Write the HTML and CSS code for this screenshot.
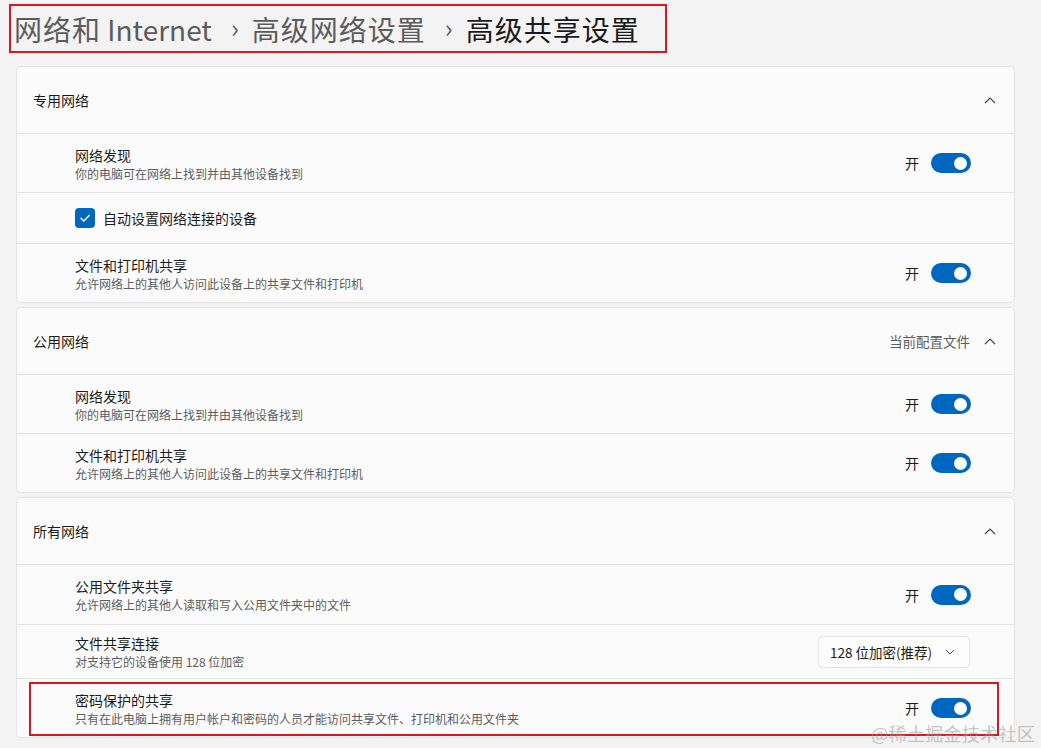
FILE: index.html
```html
<!DOCTYPE html>
<html lang="zh-CN">
<head>
<meta charset="utf-8">
<title>高级共享设置</title>
<link rel="stylesheet" href="styles.css">
</head>
<body>
<div class="page">
  <div class="crumbs">
    <span class="crumb"><span class="cjk">网络和</span> Internet</span>
    <span class="sep">›</span>
    <span class="crumb cjk">高级网络设置</span>
    <span class="sep">›</span>
    <span class="crumb cjk current">高级共享设置</span>
  </div>

  <div class="cards">
    <section class="card">
      <div class="card-head">
        <span class="head-title">专用网络</span>
        <span class="head-right"><svg class="chev" viewBox="0 0 12 8" width="12" height="8"><path d="M1 7 L6 2 L11 7" fill="none" stroke="#444" stroke-width="1.2"/></svg></span>
      </div>
      <div class="row">
        <div class="row-text"><div class="row-title">网络发现</div><div class="row-sub">你的电脑可在网络上找到并由其他设备找到</div></div>
        <div class="ctrl"><span class="on">开</span><span class="toggle"><span class="knob"></span></span></div>
      </div>
      <div class="row row-check">
        <span class="check"><svg viewBox="0 0 20 20" width="20" height="20"><path d="M6 10.2 L8.8 13 L14.2 7.4" fill="none" stroke="#fff" stroke-width="1.4" stroke-linecap="round" stroke-linejoin="round"/></svg></span>
        <span class="check-label">自动设置网络连接的设备</span>
      </div>
      <div class="row">
        <div class="row-text"><div class="row-title">文件和打印机共享</div><div class="row-sub">允许网络上的其他人访问此设备上的共享文件和打印机</div></div>
        <div class="ctrl"><span class="on">开</span><span class="toggle"><span class="knob"></span></span></div>
      </div>
    </section>

    <section class="card">
      <div class="card-head">
        <span class="head-title">公用网络</span>
        <span class="head-right"><span class="profile">当前配置文件</span><svg class="chev" viewBox="0 0 12 8" width="12" height="8"><path d="M1 7 L6 2 L11 7" fill="none" stroke="#444" stroke-width="1.2"/></svg></span>
      </div>
      <div class="row">
        <div class="row-text"><div class="row-title">网络发现</div><div class="row-sub">你的电脑可在网络上找到并由其他设备找到</div></div>
        <div class="ctrl"><span class="on">开</span><span class="toggle"><span class="knob"></span></span></div>
      </div>
      <div class="row">
        <div class="row-text"><div class="row-title">文件和打印机共享</div><div class="row-sub">允许网络上的其他人访问此设备上的共享文件和打印机</div></div>
        <div class="ctrl"><span class="on">开</span><span class="toggle"><span class="knob"></span></span></div>
      </div>
    </section>

    <section class="card">
      <div class="card-head">
        <span class="head-title">所有网络</span>
        <span class="head-right"><svg class="chev" viewBox="0 0 12 8" width="12" height="8"><path d="M1 7 L6 2 L11 7" fill="none" stroke="#444" stroke-width="1.2"/></svg></span>
      </div>
      <div class="row row-tall">
        <div class="row-text"><div class="row-title">公用文件夹共享</div><div class="row-sub">允许网络上的其他人读取和写入公用文件夹中的文件</div></div>
        <div class="ctrl"><span class="on">开</span><span class="toggle"><span class="knob"></span></span></div>
      </div>
      <div class="row row-short">
        <div class="row-text"><div class="row-title">文件共享连接</div><div class="row-sub">对支持它的设备使用 128 位加密</div></div>
        <div class="ctrl"><span class="select">128 位加密(推荐)<svg viewBox="0 0 10 6" width="10" height="6"><path d="M1 1 L5 5 L9 1" fill="none" stroke="#555" stroke-width="1"/></svg></span></div>
      </div>
      <div class="row row-mark">
        <div class="row-text"><div class="row-title">密码保护的共享</div><div class="row-sub">只有在此电脑上拥有用户帐户和密码的人员才能访问共享文件、打印机和公用文件夹</div></div>
        <div class="ctrl"><span class="on">开</span><span class="toggle"><span class="knob"></span></span></div>
        <span class="redbox"></span>
      </div>
    </section>
  </div>
  <div class="watermark">@稀土掘金技术社区</div>
</div>
</body>
</html>
```

FILE: styles.css
```css
* { box-sizing: border-box; }
html, body { margin: 0; padding: 0; }
body {
  background: #f3f3f3;
  font-family: "Noto Sans CJK SC", "Noto Sans", sans-serif;
  color: #1b1b1b;
  width: 1041px;
  height: 748px;
  overflow: hidden;
}
.page {
  position: relative;
  height: 748px;
  padding: 4px 0 0 0;
}
.crumbs {
  margin-left: 9px;
  width: 658px;
  height: 49px;
  border: 2px solid #e0141e;
  display: flex;
  align-items: center;
  padding-left: 3px;
  font-size: 28px;
  line-height: 1;
  color: #5c5c5c;
}
.cjk { letter-spacing: 1px; }
.crumb.current { color: #1a1a1a; }
.sep {
  font-size: 26px;
  margin: 0 13px 0 19px;
  color: #5c5c5c;
  position: relative;
  top: -2px;
}
.cards {
  margin: 13px 0 0 16px;
  width: 999px;
  display: flex;
  flex-direction: column;
  gap: 4px;
}
.card {
  background: #fbfbfb;
  border: 1px solid #e5e5e5;
  border-radius: 5px;
}
.card-head {
  height: 66px;
  display: flex;
  align-items: center;
  justify-content: space-between;
  padding: 0 18px 0 16px;
  font-size: 14px;
}
.head-right {
  display: flex;
  align-items: center;
  gap: 14px;
}
.profile { color: #5c5c5c; font-size: 13.5px; }
.chev { display: block; }
.row {
  position: relative;
  border-top: 1px solid #e5e5e5;
  height: 59px;
  display: flex;
  align-items: center;
  justify-content: space-between;
  padding: 0 43px 0 58px;
}
.row-tall { height: 60px; }
.row-short { height: 54px; }
.row-check { height: 51px; justify-content: flex-start; gap: 8px; }
.row-text { display: flex; flex-direction: column; padding-top: 1px; }
.row-title { font-size: 14px; line-height: 19px; color: #1b1b1b; }
.row-sub { font-size: 12px; line-height: 17px; color: #5d5d5d; }
.ctrl { display: flex; align-items: center; gap: 12px; }
.on { font-size: 14px; color: #1b1b1b; }
.toggle {
  width: 40px;
  height: 20px;
  border-radius: 10px;
  background: #0067c0;
  display: flex;
  align-items: center;
  justify-content: flex-end;
  padding-right: 4px;
}
.knob {
  width: 13px;
  height: 13px;
  border-radius: 50%;
  background: #fff;
}
.check {
  width: 20px;
  height: 20px;
  border-radius: 4px;
  background: #0067c0;
  display: block;
}
.check svg { display: block; }
.check-label { font-size: 14px; }
.select {
  width: 152px;
  height: 32px;
  background: #fdfdfd;
  border: 1px solid #e5e5e5;
  border-radius: 4px;
  display: flex;
  align-items: center;
  justify-content: space-between;
  padding: 0 14px 0 11px;
  font-size: 13.5px;
  color: #1b1b1b;
  margin-right: 1px;
}
.redbox {
  position: absolute;
  left: 12px;
  top: 3px;
  width: 970px;
  height: 54px;
  border: 2px solid #e0141e;
  pointer-events: none;
}
.watermark {
  position: absolute;
  right: 6px;
  bottom: 2px;
  font-size: 18px;
  color: rgba(150, 150, 150, 0.55);
  letter-spacing: 0.3px;
}
```
